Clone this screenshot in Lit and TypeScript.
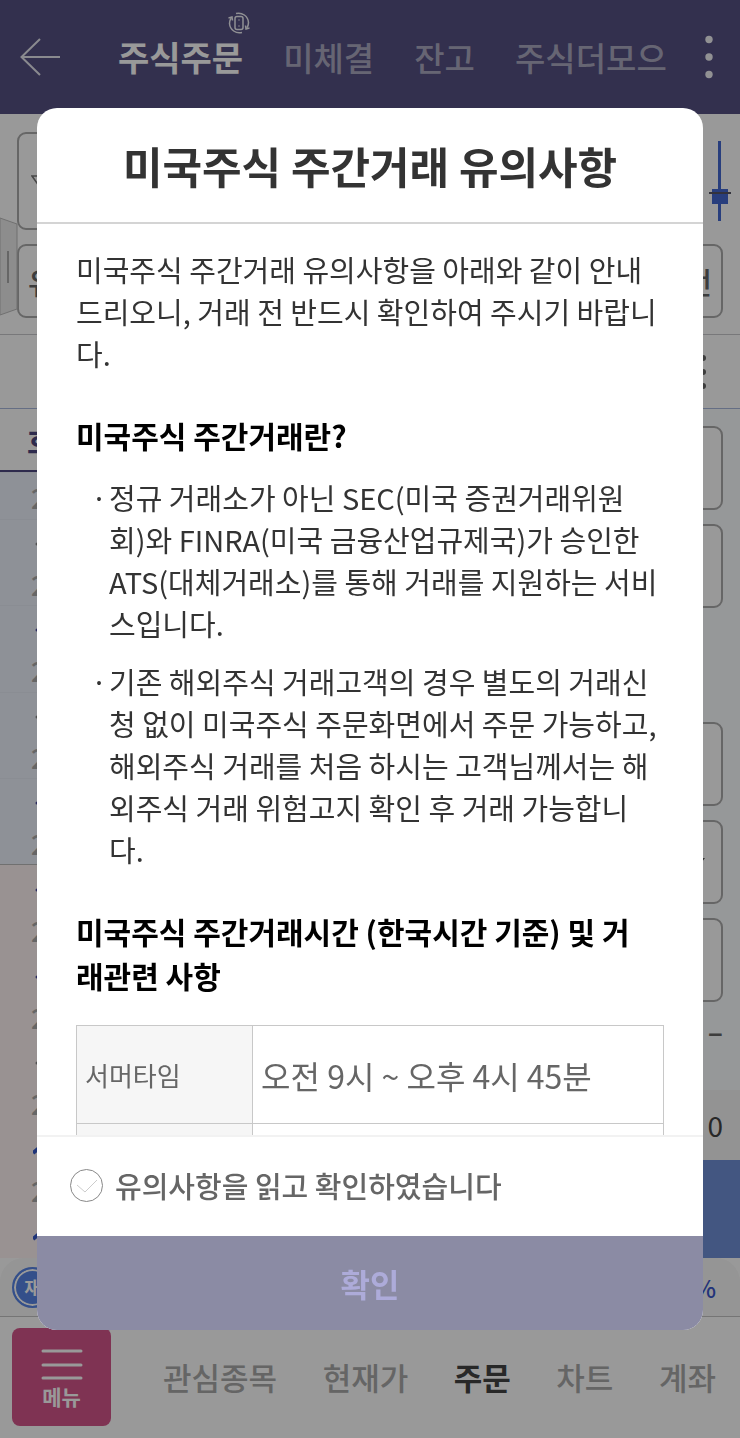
import { LitElement, html, css, svg, nothing } from "lit";
import { customElement, state } from "lit/decorators.js";

const FONT = css`"Noto Sans CJK KR", "Noto Sans", sans-serif`;

@customElement("order-header")
class OrderHeader extends LitElement {
  static styles = css`
    :host {
      display: block;
      background: #555083;
      font-family: ${FONT};
    }
    .bar {
      position: relative;
      display: flex;
      align-items: center;
      height: 114px;
      padding: 0 20px;
      box-sizing: border-box;
    }
    button {
      border: 0;
      padding: 0;
      background: none;
      font-family: inherit;
      color: inherit;
      display: block;
    }
    .back {
      width: 40px;
      margin-right: 58px;
    }
    .tabs {
      flex: 1;
      display: flex;
      gap: 40px;
      min-width: 0;
      white-space: nowrap;
      overflow: hidden;
      line-height: 48px;
    }
    .tab {
      color: #aba9c0;
      font-size: 33px;
      font-weight: 500;
      line-height: 48px;
    }
    .tab.on {
      color: #fff;
      font-size: 34px;
      font-weight: 700;
    }
    .rotate {
      position: absolute;
      left: 228px;
      top: 12px;
    }
    svg {
      display: block;
    }
  `;
  render() {
    return html`<header class="bar">
      <button class="back" aria-label="뒤로">
        <svg width="40" height="40" viewBox="0 0 40 40" fill="none" stroke="#e6e6ee" stroke-width="2">
          <path d="M20 2 1.500 20 20 38M1.500 20H40" />
        </svg>
      </button>
      <svg class="rotate" width="22" height="22" viewBox="0 0 22 22" fill="none" stroke="#f0f0f6" stroke-width="1.500">
        <rect x="7" y="4.500" width="8" height="13" rx="2" />
        <path d="M11 7.500v1M11 13.500v1" />
        <path d="M8 1.500c6-1.500 12 2.500 12.500 9 0 2-.6 4-1.800 5.500M14 20.500c-6 1.500-12-2.500-12.500-9 0-2 .6-4 1.800-5.500" />
        <path d="M0.500 6 4 5 4.500 8.500M21.500 16 18 17 17.500 13.500" />
      </svg>
      <nav class="tabs">
        <button class="tab on">주식주문</button>
        <button class="tab">미체결</button>
        <button class="tab">잔고</button>
        <button class="tab">주식더모으</button>
      </nav>
      <button aria-label="더보기">
        <svg width="22" height="44" viewBox="0 0 22 44" fill="#f2f2f6">
          <circle cx="11" cy="4.500" r="3.700" /><circle cx="11" cy="22" r="3.700" /><circle cx="11" cy="39.500" r="3.700" />
        </svg>
      </button>
    </header>`;
  }
}

@customElement("order-screen")
class OrderScreen extends LitElement {
  static styles = css`
    :host {
      display: block;
      font-family: ${FONT};
      color: #666;
    }
    * {
      box-sizing: border-box;
    }
    svg {
      display: block;
    }
    button,
    input {
      font-family: inherit;
      margin: 0;
    }
    .stock {
      position: relative;
      padding: 18px 9px 16px 17px;
      border-bottom: 1px solid #c8c8cc;
    }
    .name-row {
      display: flex;
      justify-content: space-between;
      gap: 20px;
      margin-bottom: 14px;
    }
    .box {
      border: 2px solid #aaa;
      border-radius: 9px;
      background: #fff;
    }
    .name {
      flex: 1;
      height: 98px;
      padding: 40px 12px;
    }
    .candle {
      margin-top: 9px;
    }
    .kind {
      display: flex;
      justify-content: space-between;
      align-items: center;
      height: 74px;
      margin-right: 8px;
      padding: 0 9px;
      font-size: 30px;
      font-weight: 500;
    }
    .handle {
      position: absolute;
      left: 0;
      top: 103px;
    }
    .tools {
      display: flex;
      justify-content: flex-end;
      align-items: center;
      height: 74px;
      padding-right: 33px;
      border-bottom: 1px solid #a8b8dc;
    }
    .main {
      display: grid;
      grid-template-columns: 50% 50%;
      background: #fbfdff;
    }
    .tab {
      display: block;
      width: 100%;
      height: 63px;
      border: 0;
      border-bottom: 2px solid #4d4880;
      padding: 0 27px;
      background: #fff;
      text-align: left;
      font-size: 30px;
      font-weight: 700;
      color: #4d4880;
    }
    .part {
      height: 47px;
      overflow: hidden;
    }
    .rows {
      display: grid;
      grid-template-rows: repeat(4, 1fr);
      height: 346px;
    }
    .ask {
      background: #edf2fc;
    }
    .bid {
      background: #fff4f3;
    }
    .rows.ask {
      border-bottom: 1px solid #bbb;
    }
    .cell {
      padding-left: 31px;
      font-size: 27px;
      font-weight: 500;
      line-height: 30px;
      color: #aaa;
      border-top: 1px solid #e6ebf5;
    }
    .bid .cell {
      border-color: #fff4f3;
    }
    .mark {
      height: 50px;
      padding: 20px 0 0 2px;
    }
    .first {
      padding-top: 10px;
    }
    .form {
      display: flex;
      flex-direction: column;
      align-items: stretch;
    }
    .fields {
      display: flex;
      flex-direction: column;
      gap: 14px;
      padding: 17px 17px 0;
    }
    .field {
      display: flex;
      justify-content: flex-end;
      align-items: center;
      height: 84px;
      width: 100%;
      padding-right: 14px;
    }
    .group {
      margin-top: 86px;
    }
    .none {
      padding: 0 17px 30px;
      font-size: 28px;
      font-weight: 700;
      line-height: 58px;
      text-align: right;
    }
    .total {
      display: flex;
      justify-content: flex-end;
      align-items: center;
      flex: 1;
      padding: 0 17px;
      background: #f6f6f6;
      font-size: 28px;
      color: #444;
    }
    .total span {
      line-height: 36px;
    }
    .buy {
      height: 98px;
      border: 0;
      background: #7090d8;
    }
    .ticker {
      display: flex;
      justify-content: space-between;
      align-items: center;
      height: 59px;
      padding: 0 24px 0 12px;
      border-bottom: 1px solid #c4c4c4;
      border-radius: 24px 24px 0 0;
      background: #f8f8f8;
    }
    .badge {
      display: flex;
      align-items: center;
      justify-content: center;
      width: 41px;
      height: 41px;
      border: 2px solid #5784e6;
      border-radius: 50%;
      box-shadow: inset 0 0 0 2px #fff;
      background: #5784e6;
      color: #fff;
      font-size: 18px;
      line-height: 24px;
      font-weight: 700;
    }
    .rate {
      font-size: 24px;
      font-weight: 500;
      color: #3a56cc;
    }
    .nav {
      display: flex;
      align-items: center;
      height: 122px;
      padding: 0 24px 2px 12px;
      background: #fff;
    }
    .menu {
      display: flex;
      flex-direction: column;
      align-items: center;
      width: 99px;
      height: 98px;
      margin-right: 52px;
      padding: 20px 0 0;
      border: 0;
      border-radius: 8px;
      background: #d4558a;
      color: #fff;
      font-size: 21px;
      font-weight: 700;
      line-height: 32px;
    }
    .links {
      flex: 1;
      display: flex;
      justify-content: space-between;
    }
    .links a {
      color: #a8a8a8;
      font-size: 31px;
      font-weight: 500;
      line-height: 46px;
      text-decoration: none;
    }
    .links a.on {
      color: #444;
      font-weight: 700;
    }
  `;

  private cell(big: boolean, dark: boolean, price = true) {
    return html`<div class="cell">
      <div class="mark">
        <svg width="8" height="10" viewBox="0 0 8 10" fill="none">
          ${big
            ? svg`<path d="M0 7 6 2" stroke="#3458c8" stroke-width="4"/>`
            : svg`<circle cx="4" cy="4" r="1.500" fill=${dark ? "#4a4aa0" : "#888"}/>`}
        </svg>
      </div>
      ${price ? "2" : nothing}
    </div>`;
  }

  private field(label: string) {
    return html`<input class="box field" aria-label=${label} />`;
  }

  render() {
    return html`
      <section class="stock">
        <div class="name-row">
          <div class="box name">
            <svg width="16" height="14" viewBox="0 0 16 14" fill="none" stroke="#777" stroke-width="1.500">
              <path d="M1 2h14L8 12z" />
            </svg>
          </div>
          <svg class="candle" width="22" height="80" viewBox="0 0 22 80" shape-rendering="crispEdges">
            <path fill="#4468d0" d="M9 0h3v80h-3zM3 48h16v15H3z" />
            <path fill="#556" d="M0 51h22v2H0z" />
          </svg>
        </div>
        <div class="box kind"><span>유</span><span>전</span></div>
        <svg class="handle" width="18" height="100" viewBox="0 0 18 100">
          <path d="M0 1 17 7V92L0 98z" fill="#ececec" stroke="#bbb" />
          <path d="M8 34v32" stroke="#aaa" stroke-width="2" />
        </svg>
      </section>
      <div class="tools">
        <svg width="8" height="36" viewBox="0 0 8 36" fill="#666">
          <circle cx="4" cy="4" r="3" /><circle cx="4" cy="18" r="3" /><circle cx="4" cy="32" r="3" />
        </svg>
      </div>
      <section class="main">
        <div>
          <button class="tab">호</button>
          <div class="part ask"><div class="cell first">2</div></div>
          <div class="rows ask">${[0, 1, 0, 1].map((d) => this.cell(false, !!d))}</div>
          <div class="rows bid">${[0, 1, 2, 3].map((i) => this.cell(i === 3, i < 2))}</div>
          <div class="part bid">${this.cell(true, true, false)}</div>
        </div>
        <div class="form">
          <div class="fields">
            ${this.field("주문 구분")}${this.field("주문 조건")}
            <div class="group"></div>
            ${this.field("수량")}
            <div class="box field">
              <svg width="16" height="10" viewBox="0 0 16 10" fill="#555"><path d="M2 1h12L8 9z" /></svg>
            </div>
            ${this.field("가격")}
          </div>
          <div class="none">–</div>
          <div class="total"><span>0</span></div>
          <button class="buy" aria-label="주문"></button>
        </div>
      </section>
      <div class="ticker"><span class="badge">재</span><span class="rate">%</span></div>
      <footer class="nav">
        <button class="menu">
          <svg width="42" height="32" viewBox="0 0 42 32" stroke="#fff" stroke-width="3" stroke-linecap="round">
            <path d="M2 3h38M2 17h38M2 30h38" />
          </svg>
          메뉴
        </button>
        <nav class="links">
          ${["관심종목", "현재가", "주문", "차트", "계좌"].map(
            (t) => html`<a href="#" class=${t === "주문" ? "on" : nothing}>${t}</a>`
          )}
        </nav>
      </footer>
    `;
  }
}

@customElement("notice-dialog")
class NoticeDialog extends LitElement {
  static styles = css`
    :host {
      display: flex;
      flex: 1;
      min-width: 0;
      font-family: ${FONT};
      color: #333;
    }
    * {
      box-sizing: border-box;
    }
    .dialog {
      display: flex;
      flex-direction: column;
      flex: 1;
      min-width: 0;
      border-radius: 20px;
      overflow: hidden;
      background: #fff;
    }
    h1 {
      margin: 0;
      padding: 25px 20px;
      border-bottom: 2px solid #d4d4d4;
      font-size: 43px;
      line-height: 64px;
      font-weight: 700;
      text-align: center;
      color: #333;
    }
    .body {
      flex: 1;
      min-height: 0;
      overflow: auto;
      scrollbar-width: none;
      padding: 24px 39px 0;
      font-size: 29px;
      line-height: 42px;
    }
    p {
      margin: 0;
      padding-right: 5px;
    }
    h2 {
      margin: 39px 0 19px;
      padding-right: 16px;
      font-size: 30px;
      line-height: 44px;
      font-weight: 700;
      color: #000;
    }
    ul {
      margin: 0;
      padding: 0 5px 0 0;
      list-style: none;
      display: grid;
      gap: 16px;
    }
    li {
      display: grid;
      grid-template-columns: 18px 1fr;
      padding-left: 15px;
    }
    table {
      width: 100%;
      margin-top: 28px;
      border-collapse: collapse;
      table-layout: fixed;
      color: #666;
    }
    th,
    td {
      height: 98px;
      padding: 0 8px;
      border: 1px solid #c8c8c8;
      text-align: left;
      font-weight: 400;
    }
    th {
      width: 30%;
      background: #f6f6f6;
      font-size: 26px;
    }
    td {
      font-size: 32px;
    }
    .agree {
      display: flex;
      align-items: center;
      gap: 12px;
      height: 101px;
      padding: 0 33px 3px;
      border-top: 2px solid #f2f2f2;
      font-size: 29px;
      font-weight: 500;
      color: #666;
    }
    input {
      appearance: none;
      width: 33px;
      height: 33px;
      margin: 0;
      border: 1px solid #888;
      border-radius: 50%;
      background: #fff
        url("data:image/svg+xml,%3Csvg xmlns='http://www.w3.org/2000/svg' viewBox='0 0 31 31' fill='none' stroke='%23ccc'%3E%3Cpath d='M6 15l8 7 12-12'/%3E%3C/svg%3E");
    }
    input:checked {
      border-color: #555083;
      background-color: #dddcf0;
    }
    button {
      height: 94px;
      border: 0;
      background: #555083;
      color: #fff;
      font-family: inherit;
      font-size: 32px;
      font-weight: 700;
    }
    button:disabled {
      background: #8b8ba4;
      color: #adabd9;
    }
  `;

  @state() private agreed = false;

  render() {
    return html`<section class="dialog" role="dialog" aria-modal="true" aria-labelledby="title">
      <h1 id="title">미국주식 주간거래 유의사항</h1>
      <div class="body">
        <p>미국주식 주간거래 유의사항을 아래와 같이 안내드리오니, 거래 전 반드시 확인하여 주시기 바랍니다.</p>
        <h2>미국주식 주간거래란?</h2>
        <ul>
          <li>
            <span>·</span>
            <span>정규 거래소가 아닌 SEC(미국 증권거래위원회)와 FINRA(미국 금융산업규제국)가 승인한 ATS(대체거래소)를 통해 거래를 지원하는 서비스입니다.</span>
          </li>
          <li>
            <span>·</span>
            <span>기존 해외주식 거래고객의 경우 별도의 거래신청 없이 미국주식 주문화면에서 주문 가능하고, 해외주식 거래를 처음 하시는 고객님께서는 해외주식 거래 위험고지 확인 후 거래 가능합니다.</span>
          </li>
        </ul>
        <h2>미국주식 주간거래시간 (한국시간 기준) 및 거래관련 사항</h2>
        <table>
          <tr>
            <th scope="row">서머타임</th>
            <td>오전 9시 ~ 오후 4시 45분</td>
          </tr>
          <tr>
            <th></th>
            <td></td>
          </tr>
        </table>
      </div>
      <label class="agree">
        <input
          type="checkbox"
          .checked=${this.agreed}
          @change=${(e: Event) => (this.agreed = (e.target as HTMLInputElement).checked)}
        />
        <span>유의사항을 읽고 확인하였습니다</span>
      </label>
      <button ?disabled=${!this.agreed}>확인</button>
    </section>`;
  }
}

@customElement("app-root")
class AppRoot extends LitElement {
  static styles = css`
    :host {
      display: block;
      position: relative;
      min-height: 100vh;
      background: #fff;
    }
    .scrim {
      position: fixed;
      inset: 0;
      display: flex;
      box-sizing: border-box;
      padding: 108px 5%;
      background: rgba(0, 0, 0, 0.4);
    }
  `;
  render() {
    return html`
      <order-header inert></order-header>
      <order-screen inert></order-screen>
      <div class="scrim"><notice-dialog></notice-dialog></div>
    `;
  }
}
